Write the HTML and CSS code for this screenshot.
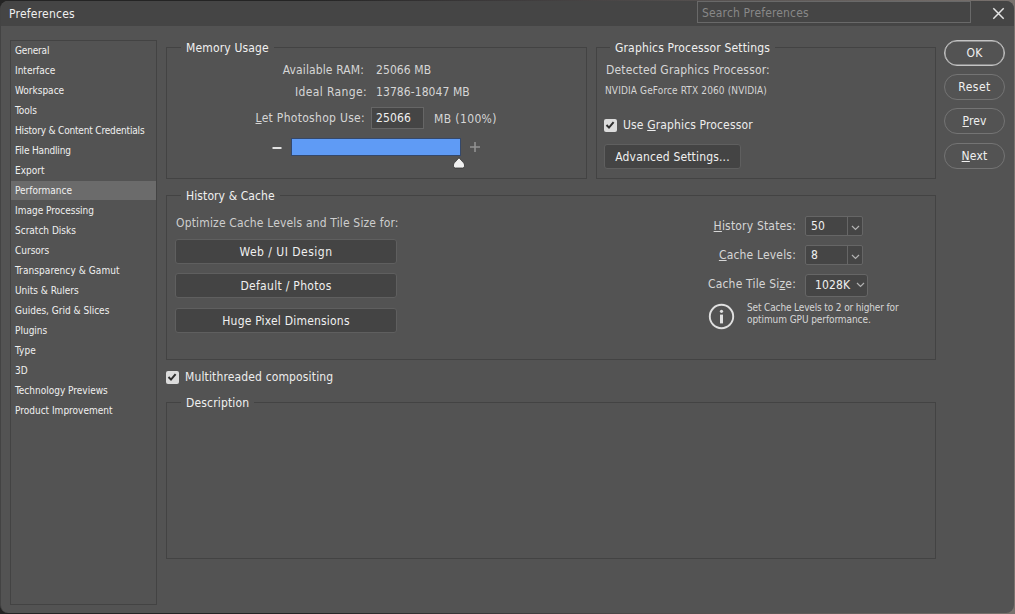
FILE: index.html
```html
<!DOCTYPE html>
<html lang="en">
<head>
<meta charset="utf-8">
<title>Preferences</title>
<link rel="stylesheet" href="styles.css">
</head>
<body>
<div class="desktop">
<div class="window">
  <header class="titlebar">
    <h1 class="title">Preferences</h1>
    <div class="search">Search Preferences</div>
    <svg class="close" width="13" height="13" viewBox="0 0 13 13"><path d="M1.3 1.3 11.7 11.7M11.7 1.3 1.3 11.7" fill="none" stroke="#e4e4e4" stroke-width="1.5"/></svg>
  </header>
  <div class="body">
    <nav class="sidebar">
      <div class="item snug"><span>General</span></div>
      <div class="item"><span>Interface</span></div>
      <div class="item"><span>Workspace</span></div>
      <div class="item"><span>Tools</span></div>
      <div class="item snug"><span>History &amp; Content Credentials</span></div>
      <div class="item snug"><span>File Handling</span></div>
      <div class="item"><span>Export</span></div>
      <div class="item selected"><span>Performance</span></div>
      <div class="item"><span>Image Processing</span></div>
      <div class="item"><span>Scratch Disks</span></div>
      <div class="item"><span>Cursors</span></div>
      <div class="item loose"><span>Transparency &amp; Gamut</span></div>
      <div class="item"><span>Units &amp; Rulers</span></div>
      <div class="item"><span>Guides, Grid &amp; Slices</span></div>
      <div class="item"><span>Plugins</span></div>
      <div class="item loose"><span>Type</span></div>
      <div class="item"><span>3D</span></div>
      <div class="item"><span>Technology Previews</span></div>
      <div class="item"><span>Product Improvement</span></div>
    </nav>
    <main class="main">
      <div class="top-row">
        <fieldset class="group memory">
          <legend>Memory Usage</legend>
          <div class="mem-row"><span class="mem-label ram">Available RAM:</span><span class="mem-value">25066 MB</span></div>
          <div class="mem-row"><span class="mem-label range">Ideal Range:</span><span class="mem-value">13786-18047 MB</span></div>
          <div class="mem-row use-row"><span class="mem-label"><u>L</u>et Photoshop Use:</span><span class="mem-input">25066</span><span class="percent">MB (100%)</span></div>
          <div class="slider-row">
            <svg width="10" height="12" viewBox="0 0 10 12"><path d="M.5 7h9" stroke="#e2e2e2" stroke-width="2"/></svg>
            <div class="slider"><svg class="thumb" width="12" height="12" viewBox="0 0 12 12"><path d="M6 .8 10.4 5.6Q11.5 6.8 11.5 8v1.2Q11.5 11 9.6 11H2.4Q.5 11 .5 9.2V8Q.5 6.8 1.6 5.6Z" fill="#f0f0f0" stroke="#343434" stroke-width=".8"/></svg></div>
            <svg width="12" height="12" viewBox="0 0 12 12"><path d="M1 6h10M6 1v10" stroke="#929292" stroke-width="1.6"/></svg>
          </div>
        </fieldset>
        <fieldset class="group gpu">
          <legend>Graphics Processor Settings</legend>
          <div class="detected">Detected Graphics Processor:</div>
          <div class="gpu-name">NVIDIA GeForce RTX 2060 (NVIDIA)</div>
          <div class="check-row gpu-check"><span class="checkbox"><svg width="12" height="12" viewBox="0 0 12 12"><path d="M2.5 6 5 8.6 9.6 3.2" fill="none" stroke="#2e2e2e" stroke-width="2"/></svg></span><span class="use-gpu">Use <u>G</u>raphics Processor</span></div>
          <div class="button advanced">Advanced Settings...</div>
        </fieldset>
      </div>
      <fieldset class="group history">
        <legend>History &amp; Cache</legend>
        <div class="history-cols">
          <div class="presets">
            <div class="optimize">Optimize Cache Levels and Tile Size for:</div>
            <div class="button web">Web / UI Design</div>
            <div class="button photos">Default / Photos</div>
            <div class="button huge">Huge Pixel Dimensions</div>
          </div>
          <div class="settings">
            <div class="set-row"><span class="set-label states"><u>H</u>istory States:</span><span class="combo"><span class="combo-value">50</span><span class="combo-arrow"><svg width="9" height="6" viewBox="0 0 9 6"><path d="M1 1 4.5 4.5 8 1" fill="none" stroke="#b2b2b2" stroke-width="1.2"/></svg></span></span></div>
            <div class="set-row"><span class="set-label levels"><u>C</u>ache Levels:</span><span class="combo"><span class="combo-value">8</span><span class="combo-arrow"><svg width="9" height="6" viewBox="0 0 9 6"><path d="M1 1 4.5 4.5 8 1" fill="none" stroke="#b2b2b2" stroke-width="1.2"/></svg></span></span></div>
            <div class="set-row"><span class="set-label tile">Cache Tile Si<u>z</u>e:</span><span class="select"><span>1028K</span><svg width="9" height="6" viewBox="0 0 9 6"><path d="M1 1 4.5 4.5 8 1" fill="none" stroke="#b2b2b2" stroke-width="1.2"/></svg></span></div>
            <div class="hint">
              <svg width="27" height="27" viewBox="0 0 27 27"><circle cx="13.5" cy="13.5" r="11.7" fill="none" stroke="#e0e0e0" stroke-width="1.9"/><circle cx="13.5" cy="8.3" r="1.6" fill="#e0e0e0"/><path d="M13.5 11.6v8.8" stroke="#e0e0e0" stroke-width="3"/></svg>
              <p><span class="hint-a">Set Cache Levels to 2 or higher for</span><br><span class="hint-b">optimum GPU performance.</span></p>
            </div>
          </div>
        </div>
      </fieldset>
      <div class="check-row multi"><span class="checkbox"><svg width="12" height="12" viewBox="0 0 12 12"><path d="M2.5 6 5 8.6 9.6 3.2" fill="none" stroke="#2e2e2e" stroke-width="2"/></svg></span><span>Multithreaded compositing</span></div>
      <fieldset class="group description"><legend>Description</legend></fieldset>
    </main>
    <aside class="actions">
      <div class="pill primary">OK</div>
      <div class="pill reset">Reset</div>
      <div class="pill"><span><u>P</u>rev</span></div>
      <div class="pill last"><span><u>N</u>ext</span></div>
    </aside>
  </div>
</div>
</div>
</body>
</html>
```

FILE: styles.css
```css
* { box-sizing: border-box; }
body { margin: 0; width: 1015px; height: 614px; overflow: hidden; background: #2b2b2b; color: #f0f0f0; font: 12px/14px "DejaVu Sans Condensed", "DejaVu Sans", sans-serif; font-stretch: condensed; letter-spacing: .16px; }
svg { display: block; flex: none; }
u { text-decoration: underline; text-underline-offset: 1px; text-decoration-thickness: 1px; text-decoration-skip-ink: none; }
.desktop { width: 1015px; height: 614px; padding-top: 1px; background: linear-gradient(90deg, #242424 0 30%, #3e3b3c 50%, #79726e 100%); }
.window { width: 1014px; height: 612px; border-left: 1px solid #434343; background: #535353; border-radius: 8px; overflow: hidden; }
.titlebar { height: 25px; background: #454545; display: flex; align-items: flex-start; padding-left: 8px; }
.title { margin: 6px 0 0; font-size: 12px; font-weight: 400; line-height: 14px; width: 688px; letter-spacing: .22px; }
.search { width: 274px; height: 22px; border: 1px solid #696969; padding: 4px; color: #888; }
.close { margin: 6px 0 0 21px; }
.body { display: flex; align-items: flex-start; padding: 14px 0 0 9px; }
.sidebar { width: 147px; height: 565px; border: 1px solid #434343; font-size: 10px; letter-spacing: 0; }
.item { height: 20px; padding: 3px 4px; line-height: 14px; white-space: nowrap; }
.snug { letter-spacing: -.17px; }
.loose { letter-spacing: .08px; }
.selected { height: 19px; margin-bottom: 1px; background: #6b6b6b; }
.main { width: 770px; margin-left: 9px; }
.top-row { display: flex; gap: 9px; }
.group { margin: 0; min-width: 0; border: 1px solid #434343; padding: 0; white-space: nowrap; }
.group legend { margin-left: 14px; padding: 1px 5px 0; height: 15px; line-height: 15px; }
.memory { width: 421px; height: 139px; color: #d6d6d6; }
.memory legend, .gpu legend, .history legend { color: #f0f0f0; }
.mem-row { display: flex; align-items: center; height: 22px; }
.mem-row:first-of-type { margin-top: 4px; }
.mem-label { width: 198px; margin-right: 11px; text-align: right; letter-spacing: .3px; }
.mem-value { letter-spacing: .08px; }
.ram { padding-right: 1px; letter-spacing: .12px; }
.range { width: 200px; margin-right: 9px; letter-spacing: .38px; }
.use-row { margin-top: 4px; }
.use-row .mem-label { margin-right: 6px; }
.mem-input { width: 53px; height: 22px; border: 1px solid #666; background: #454545; color: #f0f0f0; padding: 3px 4px; }
.percent { margin: 2px 0 0 10px; letter-spacing: .38px; }
.slider-row { display: flex; align-items: center; height: 18px; margin: 9px 0 0 105px; }
.slider { position: relative; width: 170px; height: 18px; margin: 0 8px 0 9px; border: 1px solid #34486b; background: #5f9bf5; }
.thumb { position: absolute; right: -5px; top: 18px; }
.gpu { width: 340px; height: 139px; color: #d6d6d6; padding-left: 8px; }
.gpu legend { margin-left: 5px; }
.detected { margin: 8px 0 0 1px; }
.gpu-name { margin-top: 7px; font-size: 10px; letter-spacing: .13px; }
.check-row { display: flex; align-items: center; gap: 6px; height: 14px; color: #ededed; letter-spacing: .14px; }
.checkbox { width: 13px; height: 13px; border-radius: 2px; background: #dcdcdc; }
.gpu-check { margin: 20px 0 0 -1px; }
.button { display: flex; align-items: center; justify-content: center; border: 1px solid #5f5f5f; border-radius: 3px; background: #444; color: #f0f0f0; }
.advanced { width: 137px; height: 25px; margin-top: 12px; margin-left: -1px; }
.history { height: 172px; margin-top: 9px; }
.history legend { letter-spacing: .1px; }
.history-cols { display: flex; }
.presets { width: 222px; margin-left: 8px; color: #cecece; }
.optimize { margin: 13px 0 9px 1px; }
.presets .button { height: 25px; margin-bottom: 9px; }
.presets .photos { margin-bottom: 10px; letter-spacing: .3px; }
.presets .web { letter-spacing: .48px; }
.presets .huge { letter-spacing: .2px; }
.settings { margin: 13px 0 0 242px; color: #d6d6d6; }
.set-row { display: flex; align-items: center; height: 20px; margin-bottom: 9px; }
.set-label { width: 157px; text-align: right; margin-right: 9px; letter-spacing: .18px; }
.combo { display: flex; width: 58px; height: 20px; border: 1px solid #666; border-radius: 2px; background: #454545; color: #f0f0f0; }
.combo-value { width: 42px; padding: 2px 5px; border-right: 1px solid #666; }
.combo-arrow { padding: 8px 0 0 3px; }
.select { display: flex; align-items: center; justify-content: space-between; width: 63px; height: 23px; margin: 1px 0 -1px; padding: 0 2px 0 9px; border: 1px solid #666; border-radius: 3px; background: #454545; color: #f0f0f0; }
.hint { display: flex; margin: 1px 0 0 69px; font-size: 10px; line-height: 12px; }
.hint p { margin: -1px 0 0 12px; }
.hint-a { letter-spacing: -.14px; }
.hint-b { letter-spacing: -.08px; }
.multi { margin-top: 10px; }
.description { height: 164px; margin-top: 11px; }
.actions { width: 61px; margin-left: 8px; }
.pill { display: flex; align-items: center; justify-content: center; width: 61px; height: 26px; margin-bottom: 8px; border: 1px solid #747474; border-radius: 13px; }
.primary { border: 1.5px solid #c4c4c4; box-shadow: inset 0 0 0 .5px #c4c4c4; }
.reset { letter-spacing: .5px; }
.last { margin-top: 9px; }
```
